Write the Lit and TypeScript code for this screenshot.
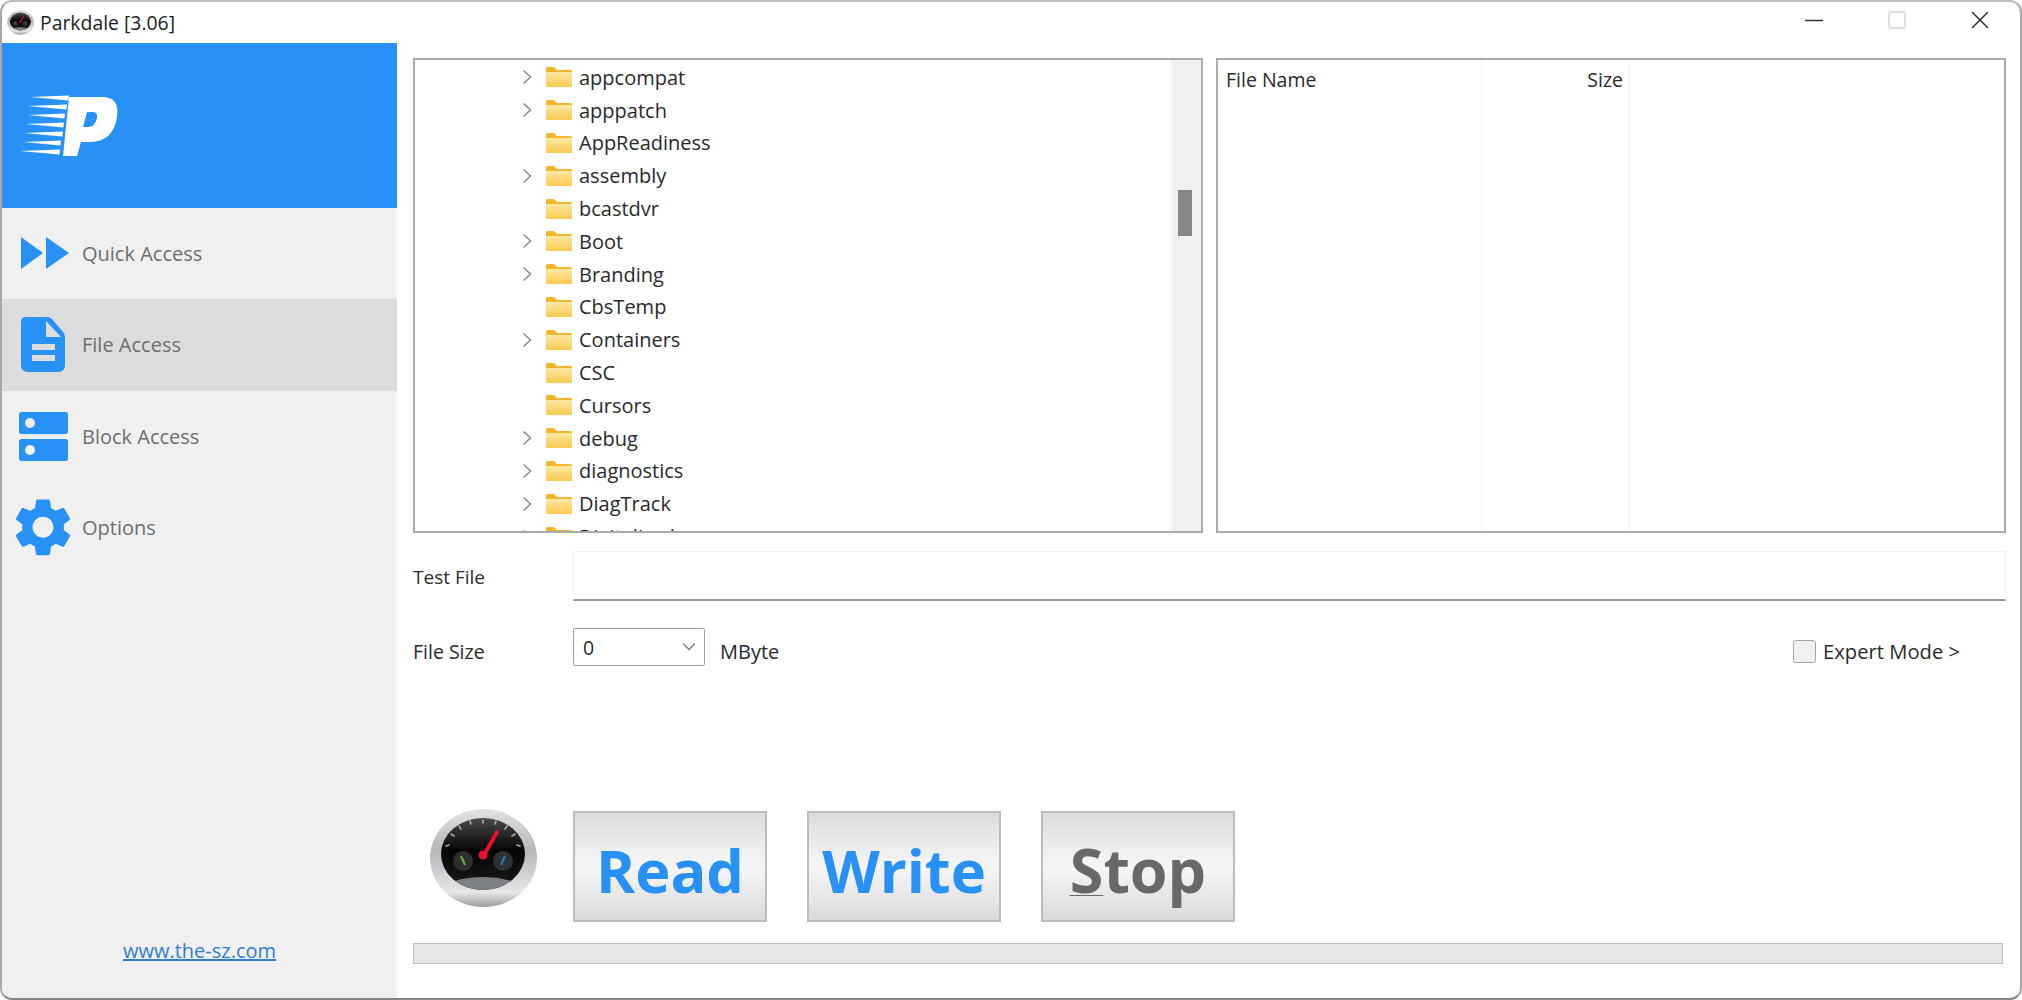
import { LitElement, html, css, svg, unsafeCSS } from "lit";
import { customElement } from "lit/decorators.js";

const BLUE = "#2891f7";
const BLUE_CSS = unsafeCSS(BLUE);

const ROWS: [string, boolean][] = [
  ["appcompat", true], ["apppatch", true], ["AppReadiness", false], ["assembly", true],
  ["bcastdvr", false], ["Boot", true], ["Branding", true], ["CbsTemp", false],
  ["Containers", true], ["CSC", false], ["Cursors", false], ["debug", true],
  ["diagnostics", true], ["DiagTrack", true], ["DigitalLocker", true],
];

const NAV = [
  { label: "Quick Access", active: false, icon: svg`
    <path d="M19 29 L41 45 L19 61 Z M44 29 L67 45 L44 61 Z" fill="${BLUE}"/>` },
  { label: "File Access", active: true, icon: svg`
    <path d="M24 18 H45 Q48 18 50 20 L61 33 Q63 35 63 38 V66 Q63 73 56 73 H26 Q19 73 19 66 V23 Q19 18 24 18 Z" fill="${BLUE}"/>
    <path d="M44 22 L59 38 H44 Z" fill="#dcdcdc"/>
    <rect x="30" y="45" width="23" height="6" fill="#dcdcdc"/>
    <rect x="30" y="56" width="23" height="6" fill="#dcdcdc"/>` },
  { label: "Block Access", active: false, icon: svg`
    <rect x="17" y="21" width="49" height="22" rx="2.5" fill="${BLUE}"/>
    <rect x="17" y="48" width="49" height="22" rx="2.5" fill="${BLUE}"/>
    <circle cx="28" cy="32" r="5" fill="#f0f0f0"/>
    <circle cx="28" cy="59" r="5" fill="#f0f0f0"/>` },
  { label: "Options", active: false, icon: svg`
    <g transform="translate(6.2 10.5) scale(2.9)"><path fill="${BLUE}" d="M19.14 12.94c.04-.3.06-.61.06-.94 0-.32-.02-.64-.07-.94l2.03-1.58c.18-.14.23-.41.12-.61l-1.92-3.32c-.12-.22-.37-.29-.59-.22l-2.39.96c-.5-.38-1.03-.7-1.62-.94l-.36-2.54c-.04-.24-.24-.41-.48-.41h-3.84c-.24 0-.43.17-.47.41l-.36 2.54c-.59.24-1.13.57-1.62.94l-2.39-.96c-.22-.08-.47 0-.59.22L2.74 8.87c-.12.21-.08.47.12.61l2.03 1.58c-.05.3-.09.63-.09.94s.02.64.07.94l-2.03 1.58c-.18.14-.23.41-.12.61l1.92 3.32c.12.22.37.29.59.22l2.39-.96c.5.38 1.03.7 1.62.94l.36 2.54c.05.24.24.41.48.41h3.84c.24 0 .44-.17.47-.41l.36-2.54c.59-.24 1.13-.56 1.62-.94l2.39.96c.22.08.47 0 .59-.22l1.92-3.32c.12-.22.07-.47-.12-.61l-2.01-1.58zM12 15.6c-1.98 0-3.6-1.62-3.6-3.6s1.62-3.6 3.6-3.6 3.6 1.62 3.6 3.6-1.62 3.6-3.6 3.6z"/></g>` },
];

const gauge = (id: string, cls: string) => html`
  <svg class=${cls} viewBox="0 0 107 100" aria-hidden="true">
    <defs>
      <linearGradient id="${id}r" x1="0" y1="0" x2="0" y2="1">
        <stop offset="0" stop-color="#e2e2e4"/><stop offset=".42" stop-color="#b4b6ba"/>
        <stop offset=".85" stop-color="#e6e6e8"/><stop offset="1" stop-color="#9a9c9e"/>
      </linearGradient>
      <linearGradient id="${id}f" x1="0" y1="0" x2="0" y2="1">
        <stop offset="0" stop-color="#4a4a4a"/><stop offset=".45" stop-color="#050505"/>
        <stop offset="1" stop-color="#1c1c1c"/>
      </linearGradient>
      <clipPath id="${id}c"><ellipse cx="53" cy="46" rx="42" ry="36"/></clipPath>
    </defs>
    <ellipse cx="53.5" cy="50" rx="53.5" ry="49" fill="url(#${id}r)"/>
    <ellipse cx="53" cy="46" rx="42" ry="36" fill="url(#${id}f)"/>
    <g clip-path="url(#${id}c)">
      <path d="M5 80 Q53 58 101 80 V90 H5 Z" fill="#7d8184"/>
    </g>
    <g stroke="#a9a9a9" stroke-width="1.6" stroke-linecap="round">
      <path d="M16 38 L19 37 M21 26 L24 28 M29 18 L31 21 M40 13 L41 16 M53 12 V15 M66 13 L65 16 M77 18 L75 21 M85 26 L82 28 M90 38 L87 37"/>
    </g>
    <circle cx="33" cy="53" r="10" fill="#2e2f2d"/>
    <circle cx="73" cy="53" r="10" fill="#2e3134"/>
    <path d="M31 48 L35 57" stroke="#6fae2e" stroke-width="2"/>
    <path d="M75 48 L71 57" stroke="#2c74b8" stroke-width="2"/>
    <path d="M54 47 L67 24" stroke="#e8102c" stroke-width="4" stroke-linecap="round"/>
    <circle cx="53" cy="47" r="4.5" fill="#e8102c"/>
  </svg>`;

@customElement("app-root")
export class AppRoot extends LitElement {
  static styles = css`
    :host { display: block; width: 2022px; height: 1000px; background: #fff; font-family: "Open Sans", "Liberation Sans", sans-serif; }
    * { box-sizing: border-box; }
    .window { width: 2022px; height: 1000px; display: flex; flex-direction: column; background: #fff; overflow: hidden;
      border: 2px solid #bdbdbd; border-left-color: #a8a8a8; border-right-color: #a8a8a8; border-bottom-color: #858585; border-radius: 12px; }
    .title { height: 41px; flex: none; display: flex; align-items: center; padding-left: 5px; color: #222; font-size: 19.4px; }
    .title-gauge { width: 27px; height: 25px; margin-right: 6px; }
    .caption { margin-left: auto; display: flex; align-items: center; height: 100%; margin-top: -5px; padding-right: 31px; }
    .caption svg { display: block; width: 18px; height: 18px; margin-left: 65px; }
    .body { flex: 1; display: flex; min-height: 0; }
    .side { width: 395px; flex: none; background: #f0f0f0; display: flex; flex-direction: column; }
    .brand { height: 165px; background: ${BLUE_CSS}; flex: none; }
    .brand svg { display: block; width: 395px; height: 165px; }
    .nav { display: flex; align-items: center; height: 91.3px; color: #6e6e6e; font-size: 20px; }
    .nav.on { background: #dcdcdc; }
    .nav svg { width: 80px; height: 91px; flex: none; }
    .foot { margin-top: auto; padding-bottom: 33px; text-align: center; font-size: 20px; line-height: 28px; }
    .foot a { color: #2f7fd1; text-decoration: underline; }
    .main { flex: 1; min-width: 0; display: flex; flex-direction: column; padding: 15px 14px 34px 16px; color: #2a2a2a; font-size: 19.5px; }
    .panes { display: grid; grid-template-columns: 790px 790px; gap: 13px; height: 475px; flex: none; }
    .pane { border: 2px solid #ababab; overflow: hidden; display: flex; background: #fff; }
    .tree { flex: 1; min-width: 0; padding-top: 1px; overflow: hidden; font-size: 20px; }
    .row { display: flex; align-items: center; height: 32.8px; padding-left: 104px; white-space: nowrap; }
    .chev { width: 16px; height: 18px; flex: none; }
    .folder { width: 26px; height: 20px; flex: none; margin: 0 7px 0 11px; }
    .bar { width: 30px; flex: none; background: #f0f0f0; padding: 130px 9px 0 7px; }
    .thumb { width: 14px; height: 46px; background: #868686; }
    .list { flex: 1; display: grid; grid-template-columns: 264px 148px 1fr; }
    .col { border-right: 1px solid #f2f2f4; padding: 6px 6px 0 8px; line-height: 28px; }
    .col.size { text-align: right; }
    .col.rest { border: 0; }
    .field { display: flex; align-items: center; flex: none; }
    .field.test { margin-top: 18px; height: 50px; }
    .field.test .lab { margin-top: 2px; font-size: 19px; }
    .field.size { margin-top: 27px; height: 38px; padding-right: 46px; }
    .lab { width: 160px; flex: none; }
    .field.size .lab, .unit { margin-top: 8px; }
    .input { flex: 1; height: 50px; border: 1px solid #f0f0f0; border-bottom: 2px solid #999; }
    .select { width: 132px; height: 38px; border: 1px solid #a0a0a0; border-radius: 2px; display: flex; align-items: center; padding-left: 9px; justify-content: space-between; }
    .select svg { width: 16px; height: 10px; margin-right: 7px; }
    .unit { margin-left: 15px; font-size: 20px; }
    .expert { margin-left: auto; margin-top: 8px; display: flex; align-items: center; font-size: 20.2px; }
    .box { width: 23px; height: 23px; border: 1px solid #a3a3a3; border-radius: 3px; background: #f0f0f0; margin-right: 7px; }
    .actions { margin-top: auto; display: flex; align-items: flex-start; flex: none; height: 111px; }
    .big-gauge { width: 107px; height: 100px; margin: -3px 36px 0 17px; flex: none; }
    .btn { width: 194px; height: 111px; margin-right: 40px; padding-top: 6px; border: 2px solid #bcbcbc; background: linear-gradient(#dcdcdc, #f6f6f6 50%, #dadada);
      display: flex; align-items: center; justify-content: center; font: 700 59.5px/1 "Open Sans", sans-serif; color: ${BLUE_CSS}; }
    .btn.stop { color: #686868; font-size: 61px; }
    .btn u { text-decoration-thickness: 1px; text-underline-offset: 2px; }
    .progress { margin: 21px 3px 0 0; height: 21px; flex: none; border: 1px solid #bdbdbd; background: #e6e6e6; }
  `;

  render() {
    return html`<div class="window">
      <div class="title">
        ${gauge("t", "title-gauge")}<span>Parkdale [3.06]</span>
        <div class="caption">
          <svg viewBox="0 0 18 18"><path d="M0 9.5H18" stroke="#333" stroke-width="1.4"/></svg>
          <svg viewBox="0 0 18 18"><rect x="1" y="1" width="16" height="16" rx="1.5" fill="none" stroke="#d4d4d4" stroke-width="1.5"/></svg>
          <svg viewBox="0 0 18 18"><path d="M1 1L17 17M17 1L1 17" stroke="#333" stroke-width="1.6"/></svg>
        </div>
      </div>
      <div class="body">
        <aside class="side">
          <div class="brand">
            <svg viewBox="0 0 395 165">
              <path fill="#fff" fill-rule="evenodd" d="M67 54 H100 Q118 54 115 74 Q111 99 88 99 H79 L75 113 H61 Z M85 69 L81 84 H86 Q93 84 95 75 Q96 69 91 69 Z"/>
              <g fill="#fff">
                ${[[28, 67, 54], [26, 65, 63], [26, 63, 72], [24, 62, 81], [22, 61, 90], [21, 59, 99], [18, 58, 108]].map(
                  ([a, b, y]) => svg`<path d="M${a} ${y} L${b} ${y - 1.5} L${b - 0.6} ${y + 3.5} Z"/>`)}
              </g>
            </svg>
          </div>
          ${NAV.map(n => html`<div class="nav ${n.active ? "on" : ""}"><svg viewBox="0 0 80 91">${n.icon}</svg><span>${n.label}</span></div>`)}
          <div class="foot"><a>www.the-sz.com</a></div>
        </aside>
        <main class="main">
          <div class="panes">
            <div class="pane">
              <div class="tree">
                ${ROWS.map(([name, kids]) => html`<div class="row">
                  <svg class="chev" viewBox="0 0 16 18">${kids ? svg`<path d="M4.5 2.5L11.5 9L4.5 15.5" fill="none" stroke="#8c8c8c" stroke-width="1.6"/>` : ""}</svg>
                  <svg class="folder" viewBox="0 0 26 20">
                    <defs><linearGradient id="fg" x1="0" y1="0" x2="0" y2="1"><stop offset="0" stop-color="#fde9a6"/><stop offset="1" stop-color="#f8c94e"/></linearGradient></defs>
                    <path d="M0 1.5Q0 0 1.5 0H8L11 3H24.5Q26 3 26 4.5V6H0Z" fill="#f3b52c"/>
                    <path d="M0 5H26V18.5Q26 20 24.5 20H1.5Q0 20 0 18.5Z" fill="url(#fg)"/>
                  </svg>
                  <span>${name}</span>
                </div>`)}
              </div>
              <div class="bar"><div class="thumb"></div></div>
            </div>
            <div class="pane">
              <div class="list">
                <div class="col">File Name</div>
                <div class="col size">Size</div>
                <div class="col rest"></div>
              </div>
            </div>
          </div>
          <div class="field test"><span class="lab">Test File</span><div class="input"></div></div>
          <div class="field size">
            <span class="lab">File Size</span>
            <div class="select"><span>0</span><svg viewBox="0 0 16 10"><path d="M2 1.5L8 7.5L14 1.5" fill="none" stroke="#777" stroke-width="1.3"/></svg></div>
            <span class="unit">MByte</span>
            <div class="expert"><div class="box"></div><span>Expert Mode &gt;</span></div>
          </div>
          <div class="actions">
            ${gauge("b", "big-gauge")}
            <div class="btn">Read</div>
            <div class="btn">Write</div>
            <div class="btn stop"><span><u>S</u>top</span></div>
          </div>
          <div class="progress"></div>
        </main>
      </div>
    </div>`;
  }
}
